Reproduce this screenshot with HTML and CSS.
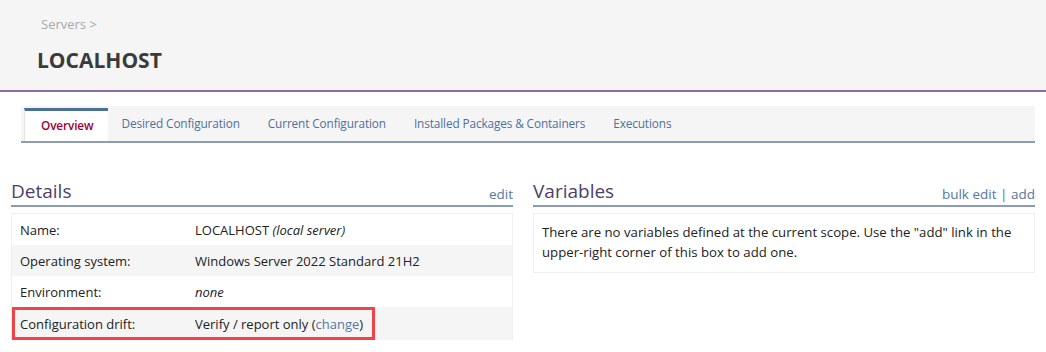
FILE: index.html
```html
<!DOCTYPE html>
<html lang="en">
<head>
  <meta charset="UTF-8" />
  <title>LOCALHOST - Servers</title>
  <link rel="stylesheet" href="styles.css">
</head>
<body>

  <header class="page-header">
    <div class="crumbs"><a href="#">Servers</a> &gt;</div>
    <h1>LOCALHOST</h1>
  </header>

  <nav class="tabs">
    <a href="#" class="tab active">Overview</a>
    <a href="#" class="tab">Desired Configuration</a>
    <a href="#" class="tab">Current Configuration</a>
    <a href="#" class="tab">Installed Packages &amp; Containers</a>
    <a href="#" class="tab">Executions</a>
  </nav>

  <main class="columns">
    <section class="panel">
      <div class="panel-head">
        <h2>Details</h2>
        <div class="links"><a href="#">edit</a></div>
      </div>
      <div class="details">
        <div class="row"><span class="label">Name:</span><span>LOCALHOST <i>(local server)</i></span></div>
        <div class="row"><span class="label">Operating system:</span><span>Windows Server 2022 Standard 21H2</span></div>
        <div class="row"><span class="label">Environment:</span><span><i>none</i></span></div>
        <div class="row drift">
          <div class="highlight">
            <span class="label">Configuration drift:</span>
            <span>Verify / report only (<a href="#">change</a>)</span>
          </div>
        </div>
      </div>
    </section>

    <section class="panel">
      <div class="panel-head">
        <h2>Variables</h2>
        <div class="links"><a href="#">bulk edit</a> <span class="sep">|</span> <a href="#">add</a></div>
      </div>
      <div class="box">
        There are no variables defined at the current scope. Use the "add" link in the
        upper-right corner of this box to add one.
      </div>
    </section>
  </main>

</body>
</html>
```

FILE: styles.css
```css
* { box-sizing: border-box; }
body {
  margin: 0;
  background: white;
  font-family: 'Open Sans', 'Liberation Sans', sans-serif;
  font-size: 13px;
  color: #222;
}
a { color: #5677a6; text-decoration: none; }

.page-header {
  background: #f5f5f5;
  height: 92px;
  padding: 14px 0 0 41px;
  border-bottom: 2px solid #8b6ca9;
}
.crumbs {
  color: #a8a8a8;
  font-size: 13px;
  line-height: 20px;
}
.crumbs a { color: #a8a8a8; }
.page-header h1 {
  margin: 12px 0 0 -4px;
  font-size: 21px;
  font-weight: bold;
  color: #3b3b3b;
  line-height: 28px;
}

.tabs {
  display: flex;
  align-items: flex-end;
  margin: 14px 11px 0 21px;
  height: 37px;
  padding-left: 3px;
  background: #f5f5f5;
  border-bottom: 2px solid #8c9db3;
}
.tab {
  height: 32px;
  line-height: 29px;
  padding: 0 14px;
  color: #4f6f9f;
  font-size: 11.8px;
  letter-spacing: -0.12px;
}
.tab.active {
  height: 33px;
  padding: 0 14px 0 16px;
  background: white;
  border-top: 3px solid #4a6f99;
  border-left: 1px solid #e4e4e4;
  color: #a00030;
  font-weight: 600;
}

.columns {
  display: grid;
  grid-template-columns: 1fr 1fr;
  gap: 20px;
  padding: 0 11px;
  margin-top: 35px;
}
.panel-head {
  display: flex;
  justify-content: space-between;
  align-items: flex-end;
  border-bottom: 2px solid #8c9db3;
  padding-bottom: 1px;
  margin-bottom: 6px;
}
.panel-head h2 {
  margin: 0;
  font-size: 19px;
  font-weight: normal;
  color: #4c3f6b;
  line-height: 26px;
}
.links { font-size: 13.5px; line-height: 20px; }
.links .sep { color: #4f6f9f; }

.details {
  border: 1px solid #efefef;
  border-bottom: none;
}
.row {
  display: flex;
  align-items: center;
  height: 31px;
  padding-left: 8px;
}
.row:nth-child(even) { background: #f5f5f5; }
.row .label { width: 175px; flex-shrink: 0; }
.row.drift {
  height: 33px;
  padding-left: 0;
  align-items: stretch;
}
.highlight {
  display: flex;
  align-items: center;
  padding: 0 9px 0 5px;
  border: 3px solid #ef4548;
}

.box {
  border: 1px solid #efefef;
  padding: 8px 8px 10px;
  font-size: 13.2px;
  line-height: 20px;
}
```
